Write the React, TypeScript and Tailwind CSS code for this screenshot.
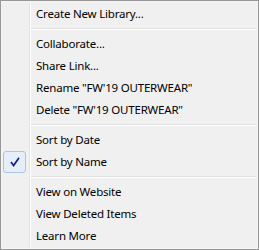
const Check = () => (
  <svg width="12" height="12" viewBox="0 0 12 12">
    <path d="M2 6 L4.6 9.5 L10 1.8" fill="none" stroke="#1d1d8f" strokeWidth="1.7" />
  </svg>
);

type Item = { label?: string; sep?: boolean; checked?: boolean };

const items: Item[] = [
  { label: "Create New Library..." },
  { sep: true },
  { label: "Collaborate..." },
  { label: "Share Link..." },
  { label: 'Rename "FW\'19 OUTERWEAR"' },
  { label: 'Delete "FW\'19 OUTERWEAR"' },
  { sep: true },
  { label: "Sort by Date" },
  { label: "Sort by Name", checked: true },
  { sep: true },
  { label: "View on Website" },
  { label: "View Deleted Items" },
  { label: "Learn More" },
];

const App = () => {
  return (
    <div
      className="w-[259px] h-[250px] border border-[#979797] bg-[#f0f0f0] p-[2px] shadow-[inset_0_0_0_1px_#f5f5f5] text-[11.5px] tracking-[-0.2px] text-black"
      style={{ fontFamily: '"Noto Sans", "Open Sans", sans-serif' }}
    >
      {items.map((it, i) =>
        it.sep ? (
          <div key={i} className="flex h-[8px]">
            <div className="w-[26px] shrink-0" />
            <div className="flex-1 border-l border-[#e2e3e3] shadow-[inset_1px_0_0_#ffffff] flex items-center pl-[1px]">
              <div className="w-full h-[2px] border-t border-[#e0e0e0] bg-white" />
            </div>
          </div>
        ) : (
          <div key={i} className="flex h-[22px]">
            <div className="w-[26px] shrink-0 flex items-stretch">
              {it.checked && (
                <div className="w-[23px] rounded-[3px] border border-[#a8c6ea] bg-[#e6eef9] flex items-center justify-center">
                  <Check />
                </div>
              )}
            </div>
            <div className="flex-1 border-l border-[#e2e3e3] shadow-[inset_1px_0_0_#ffffff] flex items-center pl-[6px] whitespace-nowrap">
              {it.label}
            </div>
          </div>
        )
      )}
    </div>
  );
};

export default App;
